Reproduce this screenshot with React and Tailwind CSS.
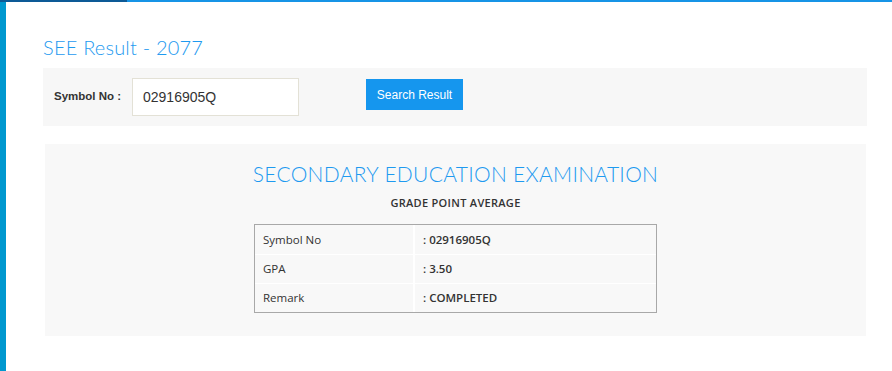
import React from 'react';

const rows = [
  { label: 'Symbol No', value: ': 02916905Q' },
  { label: 'GPA', value: ': 3.50' },
  { label: 'Remark', value: ': COMPLETED' },
];

export default function App() {
  return (
    <div className="relative w-[892px] h-[371px] bg-white overflow-hidden">
      {/* top strip */}
      <div className="flex h-[2px]">
        <div className="w-[127px] bg-[#0d5a96]" />
        <div className="flex-1 bg-[#1794e6]" />
      </div>
      <div className="flex h-[369px]">
        <div className="w-[6px] bg-[#0098cf]" />
        <div className="flex-1 pl-[37px] pr-[25px]">
          <h1 className="mt-[33px] text-[20px] leading-[24px] text-[#1e9af0] font-['Lato',sans-serif] font-light tracking-[0.2px]">
            SEE Result - 2077
          </h1>

          {/* search box */}
          <div className="mt-[9px] h-[58px] bg-[#f7f7f7] flex items-center font-['Liberation_Sans',Arial,sans-serif]">
            <span className="ml-[11px] w-[78px] text-[11.5px] font-bold text-[#333]">Symbol No :</span>
            <div className="w-[167px] h-[38px] bg-white border border-[#e3e1d6] flex items-center px-[10px] text-[14px] text-[#333]">
              02916905Q
            </div>
            <button className="ml-[67px] -mt-[5px] w-[97px] h-[31px] bg-[#1596ee] text-white text-[12px]">
              Search Result
            </button>
          </div>

          {/* result box */}
          <div className="mt-[18px] ml-[2px] mr-[1px] h-[192px] bg-[#f8f8f8] flex flex-col items-center">
            <h2 className="mt-[17px] text-[21px] leading-[25px] text-[#1e9af0] font-['Lato',sans-serif] font-light tracking-[0.3px]">
              SECONDARY EDUCATION EXAMINATION
            </h2>
            <div className="mt-[10px] text-[11px] leading-[14px] font-semibold text-[#333] font-['Open_Sans',sans-serif] tracking-[0.3px]">
              GRADE POINT AVERAGE
            </div>
            <div className="mt-[14px] w-[403px] border border-[#a8a8a8] font-['Open_Sans',sans-serif] text-[11.5px] text-[#333]">
              {rows.map((r, i) => (
                <div key={r.label} className={`flex h-[29px] items-center ${i > 0 ? 'border-t-[1.5px] border-white' : ''}`}>
                  <div className="w-[160px] h-full flex items-center pl-[8px] border-r-[2px] border-white">{r.label}</div>
                  <div className="pl-[8px] font-semibold">{r.value}</div>
                </div>
              ))}
            </div>
          </div>
        </div>
      </div>
    </div>
  );
}
